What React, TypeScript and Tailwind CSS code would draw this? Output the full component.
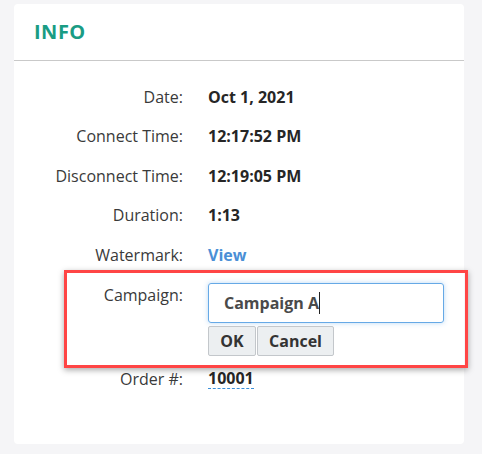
import React from "react";

const rows: Array<{ label: string; value: string; link?: boolean }> = [
  { label: "Date:", value: "Oct 1, 2021" },
  { label: "Connect Time:", value: "12:17:52 PM" },
  { label: "Disconnect Time:", value: "12:19:05 PM" },
  { label: "Duration:", value: "1:13" },
  { label: "Watermark:", value: "View", link: true },
];

export default function App() {
  return (
    <div
      className="relative w-[482px] h-[454px] bg-[#f5f5f7] pt-[4px] pl-[14px]"
      style={{ fontFamily: '"Open Sans", "Liberation Sans", sans-serif' }}
    >
      <div className="w-[450px] h-[440px] bg-white rounded-[4px]">
        <div className="h-[57px] flex items-center pl-[20px] border-b border-[#c9c9c9]">
          <h2 className="text-[20px] font-bold text-[#1a9c84] tracking-[0.5px]">INFO</h2>
        </div>

        <div className="pt-[16px]">
          {rows.map((r) => (
            <div key={r.label} className="h-[39.5px] flex items-center">
              <span className="w-[169px] text-right text-[16px] text-[#3a3a3a]">{r.label}</span>
              <span
                className={`ml-[25px] text-[16px] font-bold ${
                  r.link ? "text-[#4a8fd6]" : "text-[#262626]"
                }`}
              >
                {r.value}
              </span>
            </div>
          ))}

          <div className="flex pt-[8px] h-[84px]">
            <span className="w-[169px] text-right text-[16px] text-[#3a3a3a] leading-[22px] pt-[1px]">
              Campaign:
            </span>
            <div className="ml-[25px] flex flex-col">
              <div className="w-[236px] h-[40px] border border-[#66a9e6] rounded-[3px] shadow-[0_0_5px_rgba(102,169,230,0.45)] flex items-center pl-[15px]">
                <span className="text-[16px] font-bold text-[#4a4a4a]">Campaign A</span>
                <span className="w-[1px] h-[22px] bg-[#222]" />
              </div>
              <div className="flex mt-[3px] gap-[1px]">
                <button className="w-[48px] h-[30px] bg-[#eceff1] border border-[#c3c7cb] rounded-[2px] text-[16px] font-bold text-[#333]">
                  OK
                </button>
                <button className="w-[77px] h-[30px] bg-[#eceff1] border border-[#c3c7cb] rounded-[2px] text-[16px] font-bold text-[#333]">
                  Cancel
                </button>
              </div>
            </div>
          </div>

          <div className="h-[40px] flex items-center">
            <span className="w-[169px] text-right text-[16px] text-[#3a3a3a]">Order #:</span>
            <span className="ml-[25px] text-[16px] font-bold text-[#262626] border-b border-dashed border-[#3b8fd9] leading-[20px]">
              10001
            </span>
          </div>
        </div>
      </div>

      <div className="absolute left-[64px] top-[270px] w-[404px] h-[98px] border-[3px] border-[#ff4545] shadow-[0_2px_6px_rgba(0,0,0,0.35)]" />
    </div>
  );
}
